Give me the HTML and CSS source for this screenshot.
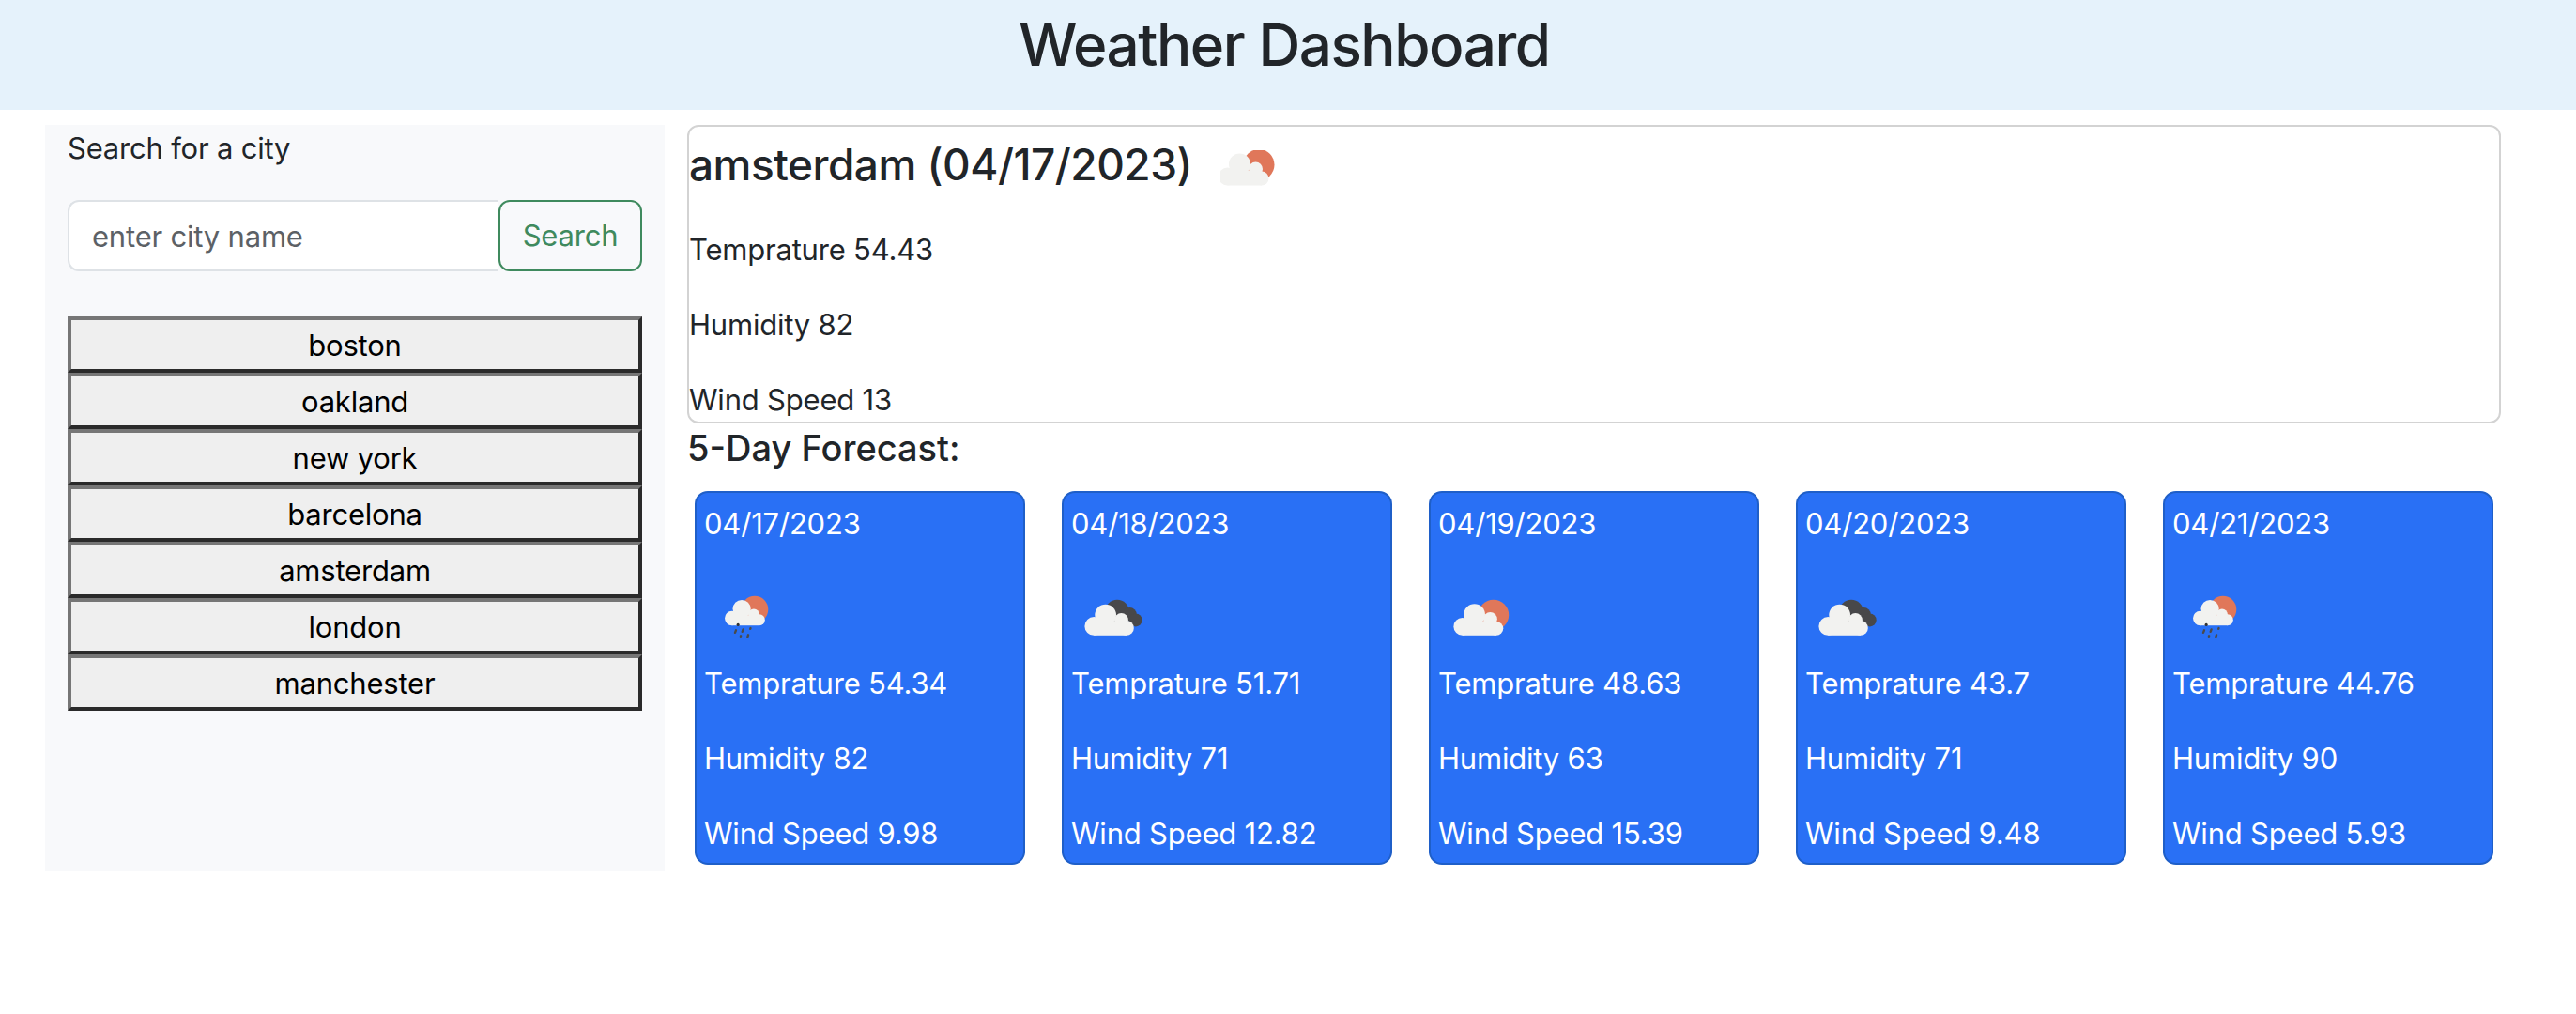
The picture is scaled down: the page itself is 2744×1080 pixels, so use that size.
FILE: index.html
```html
<!DOCTYPE html>
<html lang="en">
<head>
<meta charset="utf-8">
<title>Weather Dashboard</title>
<link rel="stylesheet" href="styles.css">
</head>
<body>
<svg class="icon-defs" aria-hidden="true">
  <defs>
    <g id="sun-cloud">
      <circle cx="61" cy="35.5" r="16.5" fill="#e0775a"/>
      <g fill="#f2f2f0">
        <circle cx="27.5" cy="48" r="9.5"/>
        <circle cx="40.5" cy="35" r="11.5"/>
        <circle cx="57.5" cy="40" r="7.5"/>
        <circle cx="64" cy="50" r="7.5"/>
        <rect x="27.5" y="42" width="36.5" height="15.5"/>
      </g>
    </g>
    <g id="dark-cloud">
      <g fill="#48484a">
        <circle cx="50" cy="32" r="13"/>
        <circle cx="63.5" cy="35" r="7.5"/>
        <circle cx="70" cy="41" r="7"/>
      </g>
      <g fill="#f2f2f0">
        <circle cx="25" cy="47.5" r="10"/>
        <circle cx="37.5" cy="35.5" r="11.5"/>
        <circle cx="54.5" cy="41" r="7.5"/>
        <circle cx="60" cy="49.5" r="8"/>
        <rect x="25" y="42" width="35" height="15.5"/>
      </g>
    </g>
    <g id="rain-cloud">
      <circle cx="64" cy="29.5" r="14.5" fill="#e0775a"/>
      <g fill="#f2f2f0">
        <circle cx="39.5" cy="39" r="7.8"/>
        <circle cx="50" cy="29" r="9.7"/>
        <circle cx="63" cy="35" r="6"/>
        <circle cx="69" cy="40.8" r="6"/>
        <rect x="39.5" y="36" width="29.5" height="10.8"/>
      </g>
      <circle cx="46" cy="46" r="1.6" fill="#333"/>
      <g stroke="#4a4a4a" stroke-width="2.4" stroke-linecap="round">
        <path d="M43.8 52L42.8 54.5"/>
        <path d="M51.5 51L50.6 53.5"/>
        <path d="M59.5 49.7L59.2 50.5"/>
        <path d="M49 58L48.8 58.5"/>
        <path d="M57 57L56.3 59"/>
      </g>
    </g>
  </defs>
</svg>

<header class="site-header">
  <h1 class="site-title">Weather Dashboard</h1>
</header>

<div class="page">
  <aside class="sidebar">
    <p class="search-label">Search for a city</p>
    <div class="search-group">
      <input class="search-input" type="text" placeholder="enter city name">
      <button class="search-button" type="button">Search</button>
    </div>
    <div class="history">
      <button class="history-button" type="button">boston</button>
      <button class="history-button" type="button">oakland</button>
      <button class="history-button" type="button">new york</button>
      <button class="history-button" type="button">barcelona</button>
      <button class="history-button" type="button">amsterdam</button>
      <button class="history-button" type="button">london</button>
      <button class="history-button" type="button">manchester</button>
    </div>
  </aside>

  <main class="content">
    <section class="current">
      <h2 class="current-title">
        <span>amsterdam (04/17/2023)</span>
        <svg class="current-icon" viewBox="20 20 60 40" role="img" aria-label="clouds"><use href="#sun-cloud"/></svg>
      </h2>
      <p class="stat">Temprature 54.43</p>
      <p class="stat">Humidity 82</p>
      <p class="stat">Wind Speed 13</p>
    </section>

    <h3 class="forecast-title">5-Day Forecast:</h3>

    <div class="forecast">
      <article class="day">
        <p class="stat">04/17/2023</p>
        <svg class="day-icon" viewBox="10 -7 100 91" role="img" aria-label="rain"><use href="#rain-cloud"/></svg>
        <p class="stat">Temprature 54.34</p>
        <p class="stat">Humidity 82</p>
        <p class="stat">Wind Speed 9.98</p>
      </article>
      <article class="day">
        <p class="stat">04/18/2023</p>
        <svg class="day-icon" viewBox="1 -7 100 91" role="img" aria-label="overcast"><use href="#dark-cloud"/></svg>
        <p class="stat">Temprature 51.71</p>
        <p class="stat">Humidity 71</p>
        <p class="stat">Wind Speed 12.82</p>
      </article>
      <article class="day">
        <p class="stat">04/19/2023</p>
        <svg class="day-icon" viewBox="2 -7 100 91" role="img" aria-label="clouds"><use href="#sun-cloud"/></svg>
        <p class="stat">Temprature 48.63</p>
        <p class="stat">Humidity 63</p>
        <p class="stat">Wind Speed 15.39</p>
      </article>
      <article class="day">
        <p class="stat">04/20/2023</p>
        <svg class="day-icon" viewBox="1 -7 100 91" role="img" aria-label="overcast"><use href="#dark-cloud"/></svg>
        <p class="stat">Temprature 43.7</p>
        <p class="stat">Humidity 71</p>
        <p class="stat">Wind Speed 9.48</p>
      </article>
      <article class="day">
        <p class="stat">04/21/2023</p>
        <svg class="day-icon" viewBox="10 -7 100 91" role="img" aria-label="rain"><use href="#rain-cloud"/></svg>
        <p class="stat">Temprature 44.76</p>
        <p class="stat">Humidity 90</p>
        <p class="stat">Wind Speed 5.93</p>
      </article>
    </div>
  </main>
</div>
</body>
</html>
```

FILE: styles.css
```css
* { box-sizing: border-box; }

html, body { margin: 0; padding: 0; }

body {
  background: #fff;
  color: #212529;
  font-family: Inter, "Liberation Sans", sans-serif;
  font-size: 31px;
  letter-spacing: -0.2px;
  line-height: 50px;
}

.icon-defs { display: none; }

.site-header {
  height: 117px;
  padding-right: 8px;
  background: #e5f2fb;
  text-align: center;
}

.site-title {
  margin: 0;
  font-size: 62px;
  font-weight: 500;
  letter-spacing: -1.45px;
  line-height: 96px;
}

.page {
  display: flex;
  gap: 24px;
  margin-top: 16px;
  padding: 0 80px 0 48px;
}

.sidebar {
  flex: 0 0 660px;
  min-width: 0;
  padding: 0 24px;
  background: #f8f9fb;
}

.search-label { margin: 0 0 30px; }

.search-group {
  display: flex;
  height: 76px;
  margin-bottom: 48px;
}

.search-input {
  flex: 1;
  min-width: 0;
  padding: 2px 24px 0;
  border: 2px solid #dee2e6;
  border-right: 0;
  border-radius: 12px 0 0 12px;
  background: #fff;
  color: #212529;
  font: inherit;
  letter-spacing: inherit;
  outline: none;
}

.search-input::placeholder { color: #5c6166; opacity: 1; }

.search-button {
  flex: 0 0 153px;
  padding: 0;
  border: 2px solid #3f8a5e;
  border-radius: 12px;
  background: transparent;
  color: #3f8a5e;
  font: inherit;
  letter-spacing: inherit;
}

.history { display: flex; flex-direction: column; }

.history-button {
  height: 60px;
  padding: 2px 0 0;
  border: 4px solid;
  border-color: #767676 #2a2a2a #2a2a2a #767676;
  background: #efefef;
  color: #000;
  font: inherit;
  letter-spacing: inherit;
  line-height: 46px;
}

.content { flex: 1; min-width: 0; }

.current {
  height: 318px;
  border: 2px solid #d3d3d3;
  border-radius: 12px;
}

.current-title {
  display: flex;
  align-items: center;
  gap: 30px;
  height: 80px;
  margin: 0 0 26px;
  font-size: 46px;
  font-weight: 500;
  letter-spacing: -0.5px;
  line-height: 80px;
}

.current-icon {
  width: 60px;
  height: 40px;
  margin-top: 10px;
}

.stat { margin: 0 0 30px; }
.stat:last-child { margin-bottom: 0; }

.forecast-title {
  height: 52px;
  margin: 0 0 20px;
  font-size: 38px;
  font-weight: 500;
  letter-spacing: 0;
  line-height: 52px;
}

.forecast {
  display: flex;
  gap: 39px;
  padding: 0 8px 7px;
}

.day {
  flex: 1;
  min-width: 0;
  padding: 8px 8px 6px;
  border: 2px solid #1f5fc8;
  border-radius: 14px;
  background: #2970f5;
  color: #fff;
}

.day-icon {
  display: block;
  width: 100px;
  height: 90px;
}
```
